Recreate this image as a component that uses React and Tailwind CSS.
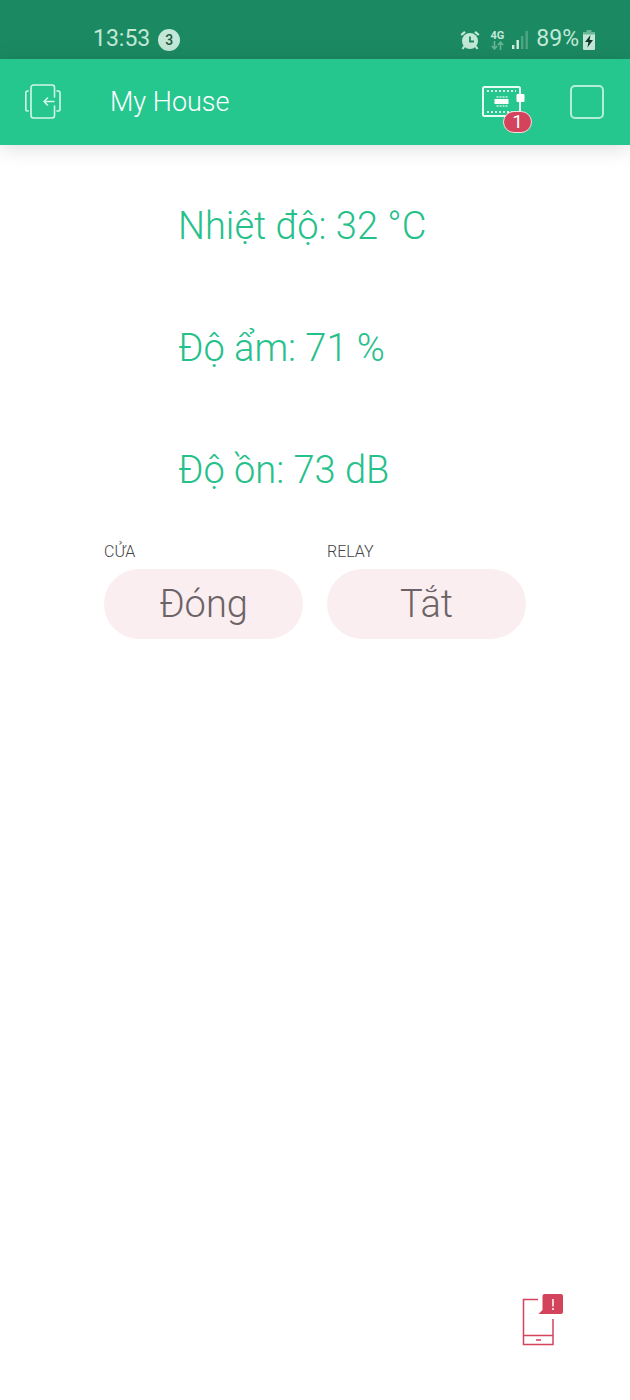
const readings = [
  { label: "Nhiệt độ", value: "32 °C" },
  { label: "Độ ẩm", value: "71 %" },
  { label: "Độ ồn", value: "73 dB" },
];

const switches = [
  { id: "door", label: "CỬA", state: "Đóng" },
  { id: "relay", label: "RELAY", state: "Tắt" },
];

function AlarmIcon() {
  return (
    <svg width="20" height="20" viewBox="0 0 20 20" fill="none" aria-hidden="true">
      <circle cx="10" cy="11" r="8" fill="#c3e8d8" />
      <path d="M1.2 5 5 1.8M18.8 5 15 1.8" stroke="#c3e8d8" strokeWidth="2.2" />
      <path d="m4.5 16-2 3M15.5 16l2 3" stroke="#c3e8d8" strokeWidth="2.2" />
      <path d="M10 6.5V11.5H14" stroke="#1b8a62" strokeWidth="1.8" />
    </svg>
  );
}

function DataArrows() {
  return (
    <svg width="13" height="9" viewBox="0 0 13 9" fill="none" stroke="#69b797" strokeWidth="1.6" aria-hidden="true">
      <path d="M3.5 0v7.5M.8 5l2.7 2.8L6.2 5M9.5 9V1.2M6.8 4l2.7-2.8L12.2 4" />
    </svg>
  );
}

function SignalIcon() {
  return (
    <svg width="17" height="20" viewBox="0 0 17 20" aria-hidden="true">
      <path d="M0 15h2.4v4H0zM4.5 10h2.4v9H4.5z" fill="#d5f0e5" />
      <path d="M9 6h2.4v13H9zM13.5 1h2.4v18h-2.4z" fill="#4fa685" />
    </svg>
  );
}

function BatteryIcon() {
  return (
    <svg width="12" height="20" viewBox="0 0 12 20" aria-hidden="true">
      <path d="M3.5 0h5v2h-5z" fill="#69b797" />
      <rect y="2" width="12" height="18" rx="1" fill="#c3e8d8" />
      <rect y="2" width="12" height="2.5" rx="1" fill="#69b797" />
      <path d="M7.5 5 2 12h3.4l-1 5.5L10 10H6.6z" fill="#12382a" />
    </svg>
  );
}

function ExitIcon() {
  return (
    <svg width="36" height="36" viewBox="0 0 36 36" fill="none" stroke="#d5f7e9" strokeWidth="1.6" strokeLinecap="round" strokeLinejoin="round" aria-hidden="true">
      <path d="M29.5 13V3.5A2.5 2.5 0 0 0 27 1H8.5A2.5 2.5 0 0 0 6 3.5v28A2.5 2.5 0 0 0 8.5 34H27a2.5 2.5 0 0 0 2.500-2.500V22" />
      <path d="M3.200 7H2.500A1.700 1.700 0 0 0 .8 8.700v16.600A1.700 1.700 0 0 0 2.500 27h.7M32 7h1.300A1.700 1.700 0 0 1 35 8.700v16.600a1.700 1.700 0 0 1-1.700 1.700H32" />
      <path d="M29 17.500H19M22.500 14 19 17.500l3.500 3.500" />
    </svg>
  );
}

function BoardIcon() {
  return (
    <svg width="43" height="32" viewBox="0 0 43 32" fill="none" aria-hidden="true">
      <rect x="1" y="1" width="37" height="29" rx="1.500" stroke="#e6fff5" strokeWidth="2" />
      <path d="M5 5h29M5 26h29" stroke="#d5f7e9" strokeWidth="2" strokeDasharray="2 2" />
      <path d="M14.500 11h11M14.500 20h11" stroke="#a3e8cd" strokeWidth="2" strokeDasharray="2 1" />
      <rect x="12.500" y="13" width="14" height="5" fill="#fff" />
      <rect x="34.500" y="8" width="8" height="8" rx="1" fill="#fff" />
    </svg>
  );
}

function PhoneAlertIcon() {
  return (
    <svg width="42" height="52" viewBox="0 0 42 52" fill="none" aria-hidden="true">
      <path d="M17 5.500H2.500V50.500H32V25M2.500 41.500H32" stroke="#d3435c" strokeWidth="1.500" />
      <path d="M15 46h5" stroke="#d3435c" strokeWidth="1.500" />
      <path d="M23.500 0H40a2 2 0 0 1 2 2v16a2 2 0 0 1-2 2H17.500l4-4V2a2 2 0 0 1 2-2z" fill="#d3435c" />
      <path d="M32 5v7.500M32 14v2" stroke="#fff" strokeWidth="1.500" />
    </svg>
  );
}

export default function App() {
  return (
    <div className="flex min-h-screen flex-col bg-white font-['Roboto','Noto_Sans',sans-serif]">
      <div className="flex h-[59px] items-center justify-between bg-[#1b8a62] pt-5 pr-[35px] pl-[93px] text-[#c3e8d8]">
        <div className="flex items-center gap-2">
          <span className="text-[23px]">13:53</span>
          <span className="flex size-[22px] items-center justify-center rounded-full bg-[#c3e8d8] text-sm font-medium text-[#20593f]">3</span>
        </div>
        <div className="flex items-center">
          <AlarmIcon />
          <div className="ml-2.5 flex flex-col items-center">
            <span className="text-[11px] leading-[11px] font-bold">4G</span>
            <DataArrows />
          </div>
          <span className="ml-2"><SignalIcon /></span>
          <span className="ml-[7px] text-[23px]">89%</span>
          <span className="ml-1"><BatteryIcon /></span>
        </div>
      </div>

      <header className="flex h-[86px] items-center bg-[#26c68f] pr-[26px] pl-[25px] text-white shadow-[0_2px_20px_rgba(0,0,0,0.15)]">
        <button type="button" aria-label="Exit"><ExitIcon /></button>
        <h1 className="ml-[49px] text-[27px] font-light">My House</h1>
        <button type="button" aria-label="Devices, 1 offline" className="relative ml-auto">
          <BoardIcon />
          <span className="absolute -right-[7px] -bottom-[15px] flex h-[22px] w-[29px] items-center justify-center rounded-full border border-[#f8dce1] bg-[#d3435c] text-[19px]">1</span>
        </button>
        <button type="button" aria-label="Stop" className="ml-[45px] size-[34px] rounded-[5px] border-2 border-[#b4eed8]" />
      </header>

      <main className="px-[104px] pt-[53px]">
        <div className="flex flex-col gap-[66px] pl-[74px]">
          {readings.map((reading) => (
            <p key={reading.label} className="text-[38px] leading-[56px] font-light whitespace-nowrap text-[#26c08a]">
              {reading.label}: {reading.value}
            </p>
          ))}
        </div>
        <div className="mt-11 grid grid-cols-2 gap-6">
          {switches.map((item) => (
            <div key={item.id} className="flex flex-col gap-[7px]">
              <label htmlFor={item.id} className="text-base leading-5 font-light text-[#444]">{item.label}</label>
              <button id={item.id} type="button" className="h-[70px] rounded-full bg-[#fbeef0] text-[38px] font-light text-[#6b6365]">
                {item.state}
              </button>
            </div>
          ))}
        </div>
      </main>

      <footer className="mt-auto flex justify-end pr-[67px] pb-[54px]">
        <button type="button" aria-label="Phone offline"><PhoneAlertIcon /></button>
      </footer>
    </div>
  );
}
